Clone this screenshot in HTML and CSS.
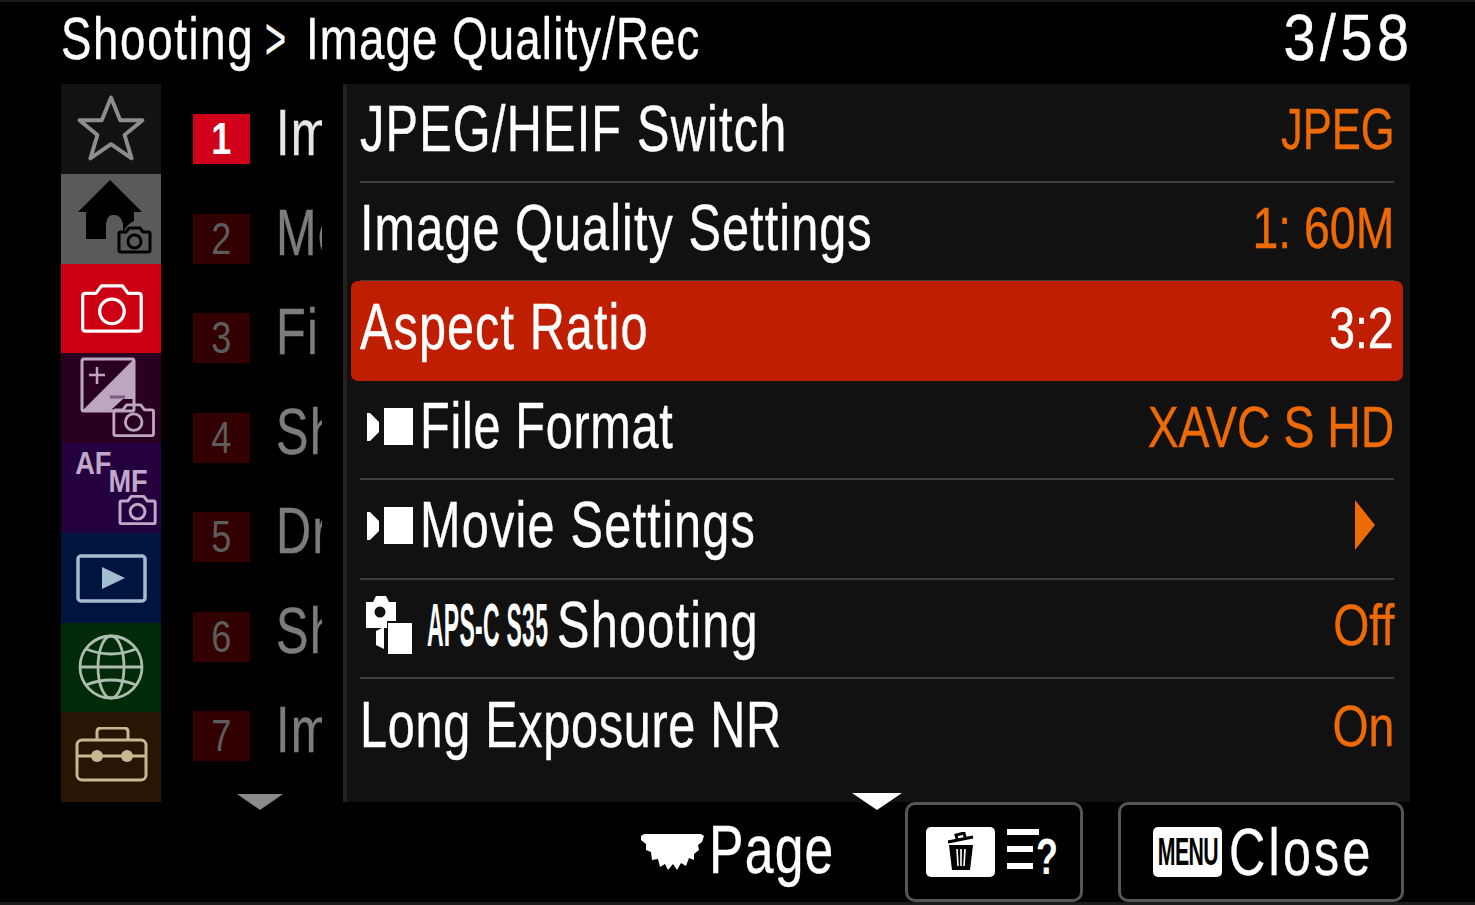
FILE: index.html
```html
<!DOCTYPE html>
<html lang="en">
<head>
<meta charset="utf-8">
<title>Shooting menu</title>
<link rel="stylesheet" href="styles.css">
</head>
<body>
<svg class="defs" width="0" height="0">
  <defs>
    <g id="cam">
      <path d="M3 8.500Q3 7 4.500 7H10L13 3H24L27 7H32.500Q34 7 34 8.500V25.500Q34 27 32.500 27H4.500Q3 27 3 25.500Z" fill="none" stroke="currentColor" stroke-linejoin="round"/>
      <circle cx="18.500" cy="16.500" r="6.500" fill="none" stroke="currentColor"/>
    </g>
    <g id="movie">
      <path d="M0 5H3L12 14V24L3 33H0Z" fill="#fff"/>
      <rect x="17" y="0" width="29" height="37" fill="#fff"/>
    </g>
  </defs>
</svg>
<div class="screen">
  <header class="top">
    <div class="crumb"><span class="crumb-a"><span class="cond">Shooting</span></span><span class="crumb-s"><span class="cond">&gt;</span></span><span class="cond crumb-b">Image Quality/Rec</span></div>
    <div class="count"><span class="cond cond-r">3/58</span></div>
  </header>
  <main class="panel">
    <nav class="rail">
      <div class="rail-item r-star">
        <svg width="76" height="76" viewBox="0 0 70 70"><path d="M35 6L43.500 27H64L47.500 40.500L54 62L35 49L16 62L22.500 40.500L6 27H26.500Z" fill="none" stroke="#8d8d8d" stroke-width="3.600" stroke-linejoin="round"/></svg>
      </div>
      <div class="rail-item r-home">
        <svg width="100" height="90" viewBox="0 0 100 90">
          <path d="M17 38L49 6L81 38H73V47Q66 50 62 58V50Q60 40 52 41Q46 41 45 50V65H25V38Z" fill="#000"/>
          <use href="#cam" x="55" y="51" color="#000" stroke-width="3"/>
        </svg>
      </div>
      <div class="rail-item r-cam">
        <svg width="68" height="57" viewBox="0 0 36 30" color="#fff"><use href="#cam" stroke-width="1.700"/></svg>
      </div>
      <div class="rail-item r-ev">
        <svg width="100" height="90" viewBox="0 0 100 90" color="#bda6bf">
          <rect x="21" y="6" width="52" height="52" rx="2" fill="none" stroke="#bda6bf" stroke-width="3"/>
          <path d="M72 7V46H62L50 57H22Z" fill="#bda6bf"/>
          <path d="M28 22H44M36 14V31" stroke="#bda6bf" stroke-width="2.500"/>
          <path d="M49 44H64" stroke="#7b5c80" stroke-width="3"/>
          <use href="#cam" transform="translate(49 48) scale(1.280)" stroke-width="2.200"/>
        </svg>
      </div>
      <div class="rail-item r-af">
        <span class="af">AF</span><span class="mf">MF</span>
        <svg class="af-cam" width="44" height="34" viewBox="0 0 36 30" color="#c2a8c8"><use href="#cam" stroke-width="2.600"/></svg>
      </div>
      <div class="rail-item r-play">
        <svg width="76" height="50" viewBox="-3 0 76 50"><rect x="2" y="3" width="67" height="45" rx="3" fill="none" stroke="#a2bdd0" stroke-width="3.500"/><path d="M26 14L49 25L26 36Z" fill="#a2bdd0"/></svg>
      </div>
      <div class="rail-item r-globe">
        <svg width="70" height="70" viewBox="0 0 70 70" fill="none" stroke="#adbcb0" stroke-width="2.800"><circle cx="35" cy="35" r="31"/><ellipse cx="35" cy="35" rx="13" ry="31"/><path d="M4 35H66M10 17Q35 27 60 17M10 53Q35 43 60 53"/></svg>
      </div>
      <div class="rail-item r-tool">
        <svg width="76" height="60" viewBox="-2 2 76 60" fill="none" stroke="#c6b991" stroke-width="3"><rect x="2" y="15" width="69" height="40" rx="5"/><path d="M22 15V7Q22 3 26 3H49Q53 3 53 7V15M2 31H71"/><circle cx="22" cy="31" r="6" fill="#c6b991" stroke="none"/><circle cx="52" cy="31" r="6" fill="#c6b991" stroke="none"/></svg>
      </div>
    </nav>
    <section class="tabs">
      <div class="tab tab-on"><span class="num"><span class="num-t">1</span></span><span class="clip"><span class="cond">Im</span></span></div>
      <div class="tab"><span class="num"><span class="num-t">2</span></span><span class="clip"><span class="cond">Me</span></span></div>
      <div class="tab"><span class="num"><span class="num-t">3</span></span><span class="clip"><span class="cond">Fil</span></span></div>
      <div class="tab"><span class="num"><span class="num-t">4</span></span><span class="clip"><span class="cond">Sh</span></span></div>
      <div class="tab"><span class="num"><span class="num-t">5</span></span><span class="clip"><span class="cond">Dr</span></span></div>
      <div class="tab"><span class="num"><span class="num-t">6</span></span><span class="clip"><span class="cond">Sh</span></span></div>
      <div class="tab"><span class="num"><span class="num-t">7</span></span><span class="clip"><span class="cond">Im</span></span></div>
      <span class="arrow-grey"></span>
    </section>
    <section class="list">
      <div class="row"><span class="cond">JPEG/HEIF Switch</span><span class="val"><span class="cond cond-r val-n">JPEG</span></span></div>
      <div class="row"><span class="cond cond-q">Image Quality Settings</span><span class="val"><span class="cond cond-r">1: 60M</span></span></div>
      <div class="row row-sel"><span class="cond cond-q">Aspect Ratio</span><span class="val val-w"><span class="cond cond-r">3:2</span></span></div>
      <div class="row"><span class="lead"><svg class="ico-movie" width="46" height="37" viewBox="0 0 46 37"><use href="#movie"/></svg><span class="cond tight">File Format</span></span><span class="val"><span class="cond cond-r">XAVC S HD</span></span></div>
      <div class="row"><span class="lead"><svg class="ico-movie" width="46" height="37" viewBox="0 0 46 37"><use href="#movie"/></svg><span class="cond">Movie Settings</span></span><svg class="caret" width="22" height="50" viewBox="0 0 22 50"><path d="M1 0L21 25L1 50Z" fill="#ee6a05"/></svg></div>
      <div class="row"><span class="lead"><svg class="ico-aps" width="46" height="59" viewBox="0 0 46 59"><path d="M0 7H7L10 1H20L23 7H30V26H21V33H0Z" fill="#fff"/><circle cx="14" cy="17" r="5.500" fill="#111"/><path d="M10 36L18 32V54L10 50Z" fill="#fff"/><rect x="22" y="28" width="24" height="31" fill="#fff"/></svg><span class="aps"><span class="cond">APS-C S35</span></span><span class="cond">Shooting</span></span><span class="val"><span class="cond cond-r">Off</span></span></div>
      <div class="row row-last"><span class="cond tight">Long Exposure NR</span><span class="val"><span class="cond cond-r">On</span></span></div>
      <span class="arrow-white"></span>
    </section>
  </main>
  <footer class="bottom">
    <div class="page">
      <svg class="page-ico" width="64" height="44" viewBox="0 0 64 44"><path d="M4 4H61L64 6L62 12L58 15L59 20L54 24L54 30L49 28L46 36L41 33L37 40L33 34L28 40L25 34L20 37L18 29L12 30L11 22L6 20L6 14L1 10L1 6Z" fill="#fff"/></svg>
      <span class="cond page-text">Page</span>
    </div>
    <div class="btn btn-del">
      <span class="trash">
        <svg width="30" height="40" viewBox="0 0 30 40"><path d="M2 10L27 5M11 7L10 3L18 1L19 5" stroke="#000" stroke-width="3" fill="none"/><path d="M3 13H27L24 38H6Z" fill="#000"/><path d="M11 17L12 34M15 17V34M19 17L18 34" stroke="#fff" stroke-width="1.600"/></svg>
      </span>
      <svg width="54" height="50" viewBox="0 0 54 50"><path d="M0 2H32V8H0ZM0 19H26V25H0ZM0 36H26V42H0Z" fill="#fff"/><text x="0" y="0" transform="translate(29 47) scale(.72 1)" class="q">?</text></svg>
    </div>
    <div class="btn btn-close">
      <span class="menu"><span class="cond-menu">MENU</span></span>
      <span class="cond close-text">Close</span>
    </div>
  </footer>
</div>
</body>
</html>
```
FILE: styles.css
```css
* { box-sizing: border-box; }
html, body { margin: 0; padding: 0; background: #000; }
body { width: 1475px; height: 905px; overflow: hidden; font-family: "Liberation Sans", Arial, sans-serif; color: #fff; }
.defs { position: absolute; }
.screen { width: 1475px; height: 905px; display: flex; flex-direction: column; border-top: 2px solid #1c1c1c; border-bottom: 3px solid #1c1c1c; background: #000; }
.cond { display: inline-block; white-space: nowrap; letter-spacing: 1.600px; -webkit-text-stroke: .4px currentColor; transform: scaleX(.76); transform-origin: left center; }
.cond-r { transform-origin: right center; letter-spacing: 0; transform: scaleX(.8); }
.cond-q { letter-spacing: 1.400px; }
.val-n { transform: scaleX(.75); }
.tight { letter-spacing: .9px; }

.top { height: 82px; flex: none; display: flex; justify-content: space-between; align-items: center; padding: 0 61px 10px 61px; font-size: 60px; }
.crumb { display: flex; align-items: center; }
.crumb .cond { letter-spacing: 2.200px; }
.crumb .crumb-b { letter-spacing: 1.500px; }
.crumb-a { display: block; width: 204px; }
.crumb-s { display: block; width: 41px; }
.crumb-s .cond { transform: scaleX(.6); }
.count .cond { font-size: 64px; letter-spacing: 5px; transform: scaleX(.9); }

.panel { width: 1349px; height: 718px; flex: none; margin-left: 61px; display: flex; }
.rail { width: 100px; flex: none; display: grid; grid-template-rows: repeat(8, 1fr); }
.rail-item { position: relative; display: flex; align-items: center; justify-content: center; overflow: hidden; }
.r-star { background: #121212; }
.r-home { background: #5a5a5a; }
.r-cam { background: #cc0012; }
.r-ev { background: #2a0020; }
.r-af { background: #25003f; }
.r-play { background: #001440; }
.r-globe { background: #002a08; }
.r-tool { background: #2a1404; }
.af, .mf { position: absolute; font-weight: 700; color: #c2a8c8; font-size: 32px; transform: scaleX(.85); }
.af { left: 11px; top: 2px; }
.mf { left: 44px; top: 20px; }
.af-cam { position: absolute; left: 54px; top: 50px; }

.tabs { position: relative; width: 186px; flex: none; background: #000; border-right: 4px solid #222; padding-top: 2px; display: flex; flex-direction: column; }
.tab { height: 99.500px; flex: none; display: flex; align-items: center; font-size: 64px; color: #7c7c7c; padding-left: 32px; }
.tab-on { color: #e6e6e6; }
.num { width: 57px; height: 50px; flex: none; display: flex; align-items: center; justify-content: center; background: #320000; color: #5c5c5c; font-size: 44px; margin-right: 26px; margin-top: 7px; }
.num-t { display: block; transform: scaleX(.82); }
.tab-on .num { background: #d0001a; color: #fff; font-weight: 700; }
.clip { display: block; width: 46px; overflow: hidden; padding-bottom: 5px; }
.arrow-grey { position: absolute; left: 76px; bottom: -8px; width: 0; height: 0; border-left: 23px solid transparent; border-right: 23px solid transparent; border-top: 16px solid #8a8a8a; }

.list { position: relative; flex: 1; background: #111; padding: 0 16px 0 13px; display: flex; flex-direction: column; }
.row { height: 99.400px; flex: none; display: flex; align-items: center; justify-content: space-between; border-bottom: 2px solid #3d3d3d; font-size: 64px; color: #fff; padding-bottom: 7px; }
.row:first-child { height: 98.500px; }
.row-last { border-bottom: none; }
.row-sel { margin: -1px -9px 0; padding: 0 9px 7px; height: 100px; background: #c01e00; border-radius: 7px; border-bottom: none; }
.val { font-size: 58px; color: #ee6a05; }
.val-w { color: #fff; }
.lead { display: flex; align-items: center; }
.ico-movie { margin: 0 7px 0 7px; flex: none; }
.ico-aps { margin: 0 15px 0 6px; flex: none; }
.aps { display: block; width: 130px; font-size: 62px; font-weight: 700; }
.aps .cond { letter-spacing: .8px; transform: scaleX(.37); -webkit-text-stroke: 0; }
.caret { margin-right: 18px; }
.arrow-white { position: absolute; left: 505px; bottom: -8px; width: 0; height: 0; border-left: 25px solid transparent; border-right: 25px solid transparent; border-top: 17px solid #fff; }

.bottom { flex: 1; display: flex; align-items: stretch; justify-content: flex-end; padding-right: 71px; }
.page { display: flex; align-items: center; gap: 5px; width: 265px; font-size: 68px; }
.page-ico { flex: none; }
.page-text { position: relative; top: -3px; }
.btn { border: 3px solid #565656; border-radius: 10px; display: flex; align-items: center; flex: none; }
.btn-del { width: 178px; margin-right: 35px; padding-left: 18px; gap: 12px; }
.trash { width: 69px; height: 50px; background: #fff; border-radius: 5px; display: flex; align-items: center; justify-content: center; flex: none; }
.q { font-family: "Liberation Sans", sans-serif; font-size: 50px; font-weight: 700; fill: #fff; }
.btn-close { width: 286px; padding-left: 32px; gap: 7px; font-size: 66px; }
.close-text { letter-spacing: 4.300px; }
.menu { width: 69px; height: 50px; background: #fff; border-radius: 5px; color: #000; display: flex; align-items: center; justify-content: center; flex: none; overflow: hidden; }
.cond-menu { display: inline-block; font-size: 38px; font-weight: 700; letter-spacing: -1px; transform: scaleX(.56); white-space: nowrap; }
```
